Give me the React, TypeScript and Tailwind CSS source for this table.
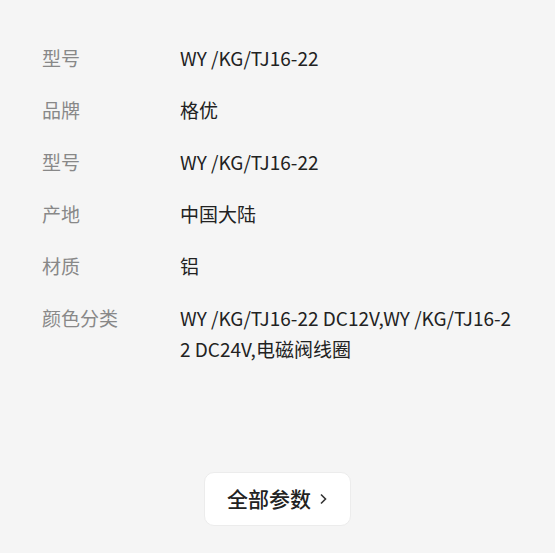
const rows: { label: string; value: string }[] = [
  { label: "型号", value: "WY /KG/TJ16-22" },
  { label: "品牌", value: "格优" },
  { label: "型号", value: "WY /KG/TJ16-22" },
  { label: "产地", value: "中国大陆" },
  { label: "材质", value: "铝" },
  { label: "颜色分类", value: "WY /KG/TJ16-22 DC12V,WY /KG/TJ16-22 DC24V,电磁阀线圈" },
];

export default function App() {
  return (
    <div
      className="h-[553px] w-[555px] bg-[#f5f5f5]"
      style={{ fontFamily: '"Noto Sans CJK SC", "Noto Sans", sans-serif' }}
    >
      <div className="flex flex-col gap-[21px] pt-[42px] text-[19px] leading-[31px]">
        {rows.map((r, i) => (
          <div key={i} className="flex">
            <div className="w-[180px] shrink-0 pl-[42px] text-[#888888]">{r.label}</div>
            <div className="w-[340px] break-all text-[#222222]">{r.value}</div>
          </div>
        ))}
      </div>
      <div className="mt-[108px] flex justify-center">
        <button
          type="button"
          className="flex h-[54px] w-[147px] items-center justify-center gap-[7px] rounded-[10px] border border-[#ececec] bg-white text-[21px] font-medium text-[#222222]"
        >
          全部参数
          <svg width="10" height="14" viewBox="0 0 10 14" fill="none" stroke="#333" strokeWidth="1.6">
            <path d="M3 2.5l4.5 4.5-4.5 4.5" />
          </svg>
        </button>
      </div>
    </div>
  );
}
